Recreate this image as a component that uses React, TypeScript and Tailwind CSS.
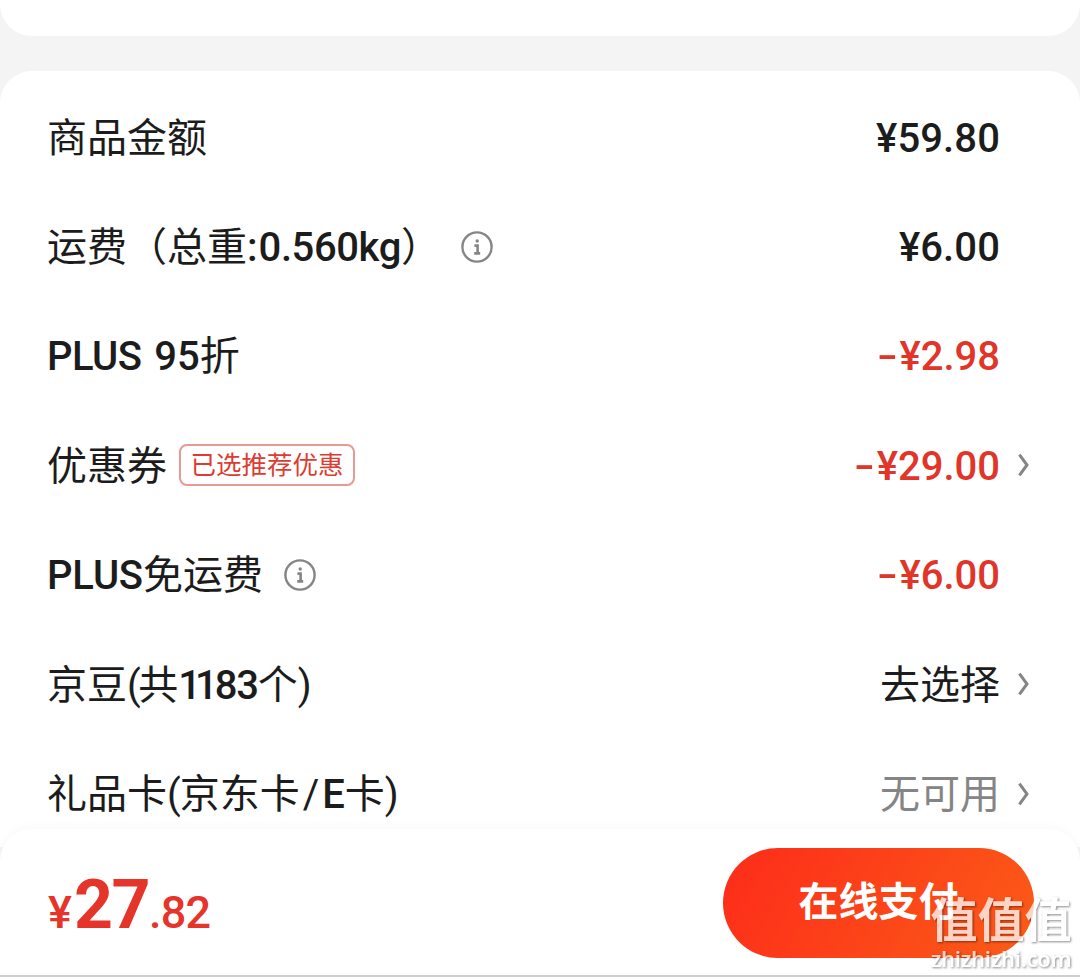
import React from "react";

type Row = {
  label: React.ReactNode;
  value: React.ReactNode;
  valueClass?: string;
  arrow?: boolean;
};

const InfoIcon: React.FC<{ className?: string }> = ({ className = "" }) => (
  <svg
    className={`-mt-[3px] h-8 w-8 shrink-0 ${className}`}
    viewBox="0 0 32 32"
    fill="none"
    stroke="#858585"
    aria-hidden="true"
  >
    <circle cx="16" cy="16" r="14.6" strokeWidth="2.4" />
    <circle cx="16.2" cy="10" r="1.7" fill="#858585" stroke="none" />
    <path d="M13.4 14.6h3.2v7.2M13.2 22.4h6" strokeWidth="2.6" />
  </svg>
);

const Arrow: React.FC = () => (
  <svg
    className="-mt-[3px] ml-[18px] h-6 w-3 shrink-0"
    viewBox="0 0 12 24"
    fill="none"
    stroke="#858585"
    strokeWidth="3"
    aria-hidden="true"
  >
    <path d="M1.4 1.6 L9 12 L1.4 22.4" />
  </svg>
);

const Discount: React.FC<{ amount: string }> = ({ amount }) => (
  <span className="font-medium text-[#e1352a]">
    <span className="mr-0.5 inline-block origin-right scale-x-[1.5]">-</span>
    {amount}
  </span>
);

const rows: Row[] = [
  {
    label: "商品金额",
    value: "¥59.80",
    valueClass: "font-medium tracking-[0.1px]",
  },
  {
    label: (
      <>
        运费（总重
        <span className="font-medium">:</span>
        <span className="ml-px font-medium tracking-[-0.4px]">0.560kg</span>）
        <InfoIcon className="ml-5" />
      </>
    ),
    value: "¥6.00",
    valueClass: "font-medium tracking-[0.1px]",
  },
  {
    label: (
      <>
        <span className="mr-[13px] font-medium tracking-[-0.6px]">PLUS</span>
        <span className="font-medium">95</span>
        折
      </>
    ),
    value: <Discount amount="¥2.98" />,
  },
  {
    label: (
      <>
        优惠券
        <span className="-mt-[3px] ml-3 flex h-[42px] w-[176px] items-center justify-center rounded-lg border-2 border-[#e79a94] text-[25.5px] text-[#dc3c32]">
          已选推荐优惠
        </span>
      </>
    ),
    value: <Discount amount="¥29.00" />,
    arrow: true,
  },
  {
    label: (
      <>
        <span className="font-medium tracking-[-0.2px]">PLUS</span>
        免运费
        <InfoIcon className="ml-[21px]" />
      </>
    ),
    value: <Discount amount="¥6.00" />,
  },
  {
    label: (
      <>
        京豆<span className="-mr-0.5 tracking-[-0.5px]">(</span>共
        <span className="font-medium">
          <span className="tracking-[-6px]">11</span>
          <span className="ml-[3px] tracking-[-1.2px]">83</span>
        </span>
        <span>个</span>
        <span>)</span>
      </>
    ),
    value: "去选择",
    arrow: true,
  },
  {
    label: (
      <>
        礼品卡<span className="-mr-px">(</span>京东卡
        <span className="mx-[3px]">/</span>
        <span className="font-medium">E</span>卡<span>)</span>
      </>
    ),
    value: "无可用",
    valueClass: "text-[#858585]",
    arrow: true,
  },
];

const App: React.FC = () => {
  return (
    <div className="relative flex h-[977px] w-[1080px] flex-col overflow-hidden bg-[#f4f4f4] font-[Roboto,'Noto_Sans_CJK_SC',sans-serif] text-[#1c1c1c]">
      <div className="h-9 shrink-0 rounded-b-[32px] bg-white" />

      <main className="mt-[35px] h-[776px] shrink-0 rounded-t-[32px] bg-white pt-[13px] pr-[50px] pl-[47px]">
        {rows.map((row, i) => (
          <div
            key={i}
            className="flex h-[109.4px] items-center justify-between text-[40px] leading-none whitespace-nowrap"
          >
            <div className="flex items-center">{row.label}</div>
            <div className="flex items-center">
              <span className={row.valueClass}>{row.value}</span>
              {row.arrow ? <Arrow /> : <span className="w-[30px]" />}
            </div>
          </div>
        ))}
      </main>

      <footer className="-mt-[18px] flex h-[148px] shrink-0 items-start justify-between rounded-t-[32px] border-b-2 border-[#cfcfcf] bg-white pt-[19px] pr-[46px] pl-[48px] shadow-[0_-3px_8px_rgba(0,0,0,0.025)]">
        <div className="flex items-baseline pt-[23px] leading-none font-medium text-[#e5352a]">
          <span className="mr-0.5 text-[45px]">¥</span>
          <span className="text-[68px] font-bold tracking-[-1.5px]">27</span>
          <span className="text-[45px] tracking-[-0.8px]">.82</span>
        </div>
        <button
          type="button"
          className="h-[110px] w-[311px] rounded-full bg-linear-[120deg,#fd2b1a,#fb5c17] text-[40px] leading-none font-bold text-white"
        >
          在线支付
        </button>
      </footer>

      {/* 水印 */}
      <div className="absolute right-2 bottom-0 flex w-[142px] flex-col items-center leading-none whitespace-nowrap text-white opacity-75 drop-shadow-[1px_1px_1px_rgba(0,0,0,0.6)]">
        <span className="text-[47px] font-bold">值值值</span>
        <span className="mt-[3px] pb-2 font-['Noto_Sans',sans-serif] text-[22px] font-semibold tracking-[-0.3px]">
          zhizhizhi.com
        </span>
      </div>
    </div>
  );
};

export default App;
